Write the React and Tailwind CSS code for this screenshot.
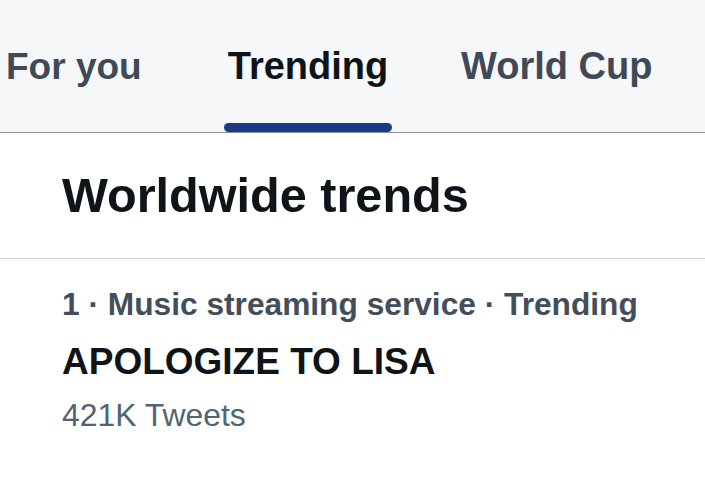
import React from 'react'

const font = { fontFamily: '"Liberation Sans", Arial, sans-serif' }

export default function App() {
  return (
    <div className="w-[705px] h-[496px] bg-white overflow-hidden" style={font}>
      {/* tab bar */}
      <div className="h-[133px] flex bg-[#f6f7f8] border-b border-[#8d8f92]">
        <div className="w-[224px] pl-[6px] pt-[48px]">
          <span className="text-[37px] leading-[37px] font-bold text-[#3f4a56]">For you</span>
        </div>
        <div className="w-[168px] flex flex-col">
          <div className="pt-[48px] text-[38px] leading-[37px] font-bold text-[#0f1419] text-center">
            Trending
          </div>
          <div className="mt-auto h-[9px] rounded-full bg-[#173a8a]" />
        </div>
        <div className="ml-[69px] pt-[48px]">
          <span className="text-[38px] leading-[37px] font-bold text-[#3f4a56]">World Cup</span>
        </div>
      </div>

      {/* header */}
      <div className="h-[126px] pl-[62px] pt-[38px] border-b border-[#d3d4d6]">
        <h1 className="text-[48.6px] leading-[48px] font-bold text-[#0f1419]">Worldwide trends</h1>
      </div>

      {/* trend item */}
      <div className="pl-[62px] pt-[30px]">
        <div className="text-[31.7px] leading-[31px] font-bold text-[#434e5a]">
          1 · Music streaming service · Trending
        </div>
        <div className="mt-[23px] text-[37px] leading-[37px] font-bold text-[#0f1419]">
          APOLOGIZE TO LISA
        </div>
        <div className="mt-[20px] text-[31.9px] leading-[31px] text-[#536471]">
          421K Tweets
        </div>
      </div>
    </div>
  )
}
